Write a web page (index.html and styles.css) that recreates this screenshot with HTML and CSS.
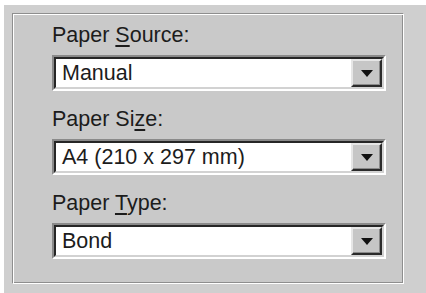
FILE: index.html
```html
<!DOCTYPE html>
<html>
<head>
<meta charset="utf-8">
<link rel="stylesheet" href="styles.css">
</head>
<body>
<div class="dialog">
  <div class="group">
    <div class="field">
      <div class="label">Paper <u>S</u>ource:</div>
      <div class="combo"><div class="combo-in"><span class="value">Manual</span><span class="btn"><span class="arrow"></span></span></div></div>
    </div>
    <div class="field">
      <div class="label">Paper Si<u>z</u>e:</div>
      <div class="combo"><div class="combo-in"><span class="value">A4 (210 x 297 mm)</span><span class="btn"><span class="arrow"></span></span></div></div>
    </div>
    <div class="field">
      <div class="label">Paper <u>T</u>ype:</div>
      <div class="combo"><div class="combo-in"><span class="value">Bond</span><span class="btn"><span class="arrow"></span></span></div></div>
    </div>
  </div>
</div>
</body>
</html>
```

FILE: styles.css
```css
html, body {
  margin: 0;
  padding: 0;
  background: #ffffff;
  width: 426px;
  height: 293px;
  overflow: hidden;
}
.dialog {
  margin: 5px 0 0 4px;
  height: 288px;
  background: #cfcfcf;
  padding: 8px 0 0 8px;
  box-sizing: border-box;
}
.group {
  width: 392px;
  height: 271px;
  box-sizing: border-box;
  border: 1px solid #8e8e8e;
  border-right-color: #ffffff;
  border-bottom-color: #ffffff;
  box-shadow: inset 1px 1px 0 #ffffff, inset -1px -1px 0 #8e8e8e;
  background: #c9c9c9;
  padding: 9px 17px 0 39px;
  display: flex;
  flex-direction: column;
  gap: 16px;
  font-family: "Liberation Sans", Arial, sans-serif;
  font-size: 21.5px;
  color: #1c1c1c;
}
.field {
  display: flex;
  flex-direction: column;
  gap: 8px;
}
.label {
  line-height: 24px;
  height: 24px;
}
.label u {
  text-underline-offset: 3px;
  text-decoration-thickness: 2px;
}
.combo {
  height: 36px;
  box-sizing: border-box;
  border: 2px solid;
  border-color: #8a8a8a #ffffff #ffffff #8a8a8a;
}
.combo-in {
  height: 100%;
  box-sizing: border-box;
  border: 2px solid;
  border-color: #262626 #d2d2d2 #d2d2d2 #262626;
  background: #ffffff;
  display: flex;
  align-items: stretch;
}
.value {
  flex: 1;
  line-height: 28px;
  padding-left: 6px;
}
.btn {
  width: 31px;
  box-sizing: border-box;
  border: 2px solid;
  border-color: #e6e6e6 #2a2a2a #2a2a2a #e6e6e6;
  box-shadow: inset -1px -1px 0 #8a8a8a;
  background: #c6c6c6;
  display: flex;
  align-items: center;
  justify-content: center;
}
.arrow {
  width: 0;
  height: 0;
  border-left: 6px solid transparent;
  border-right: 6px solid transparent;
  border-top: 7px solid #111111;
  margin-top: 1px;
}
```
